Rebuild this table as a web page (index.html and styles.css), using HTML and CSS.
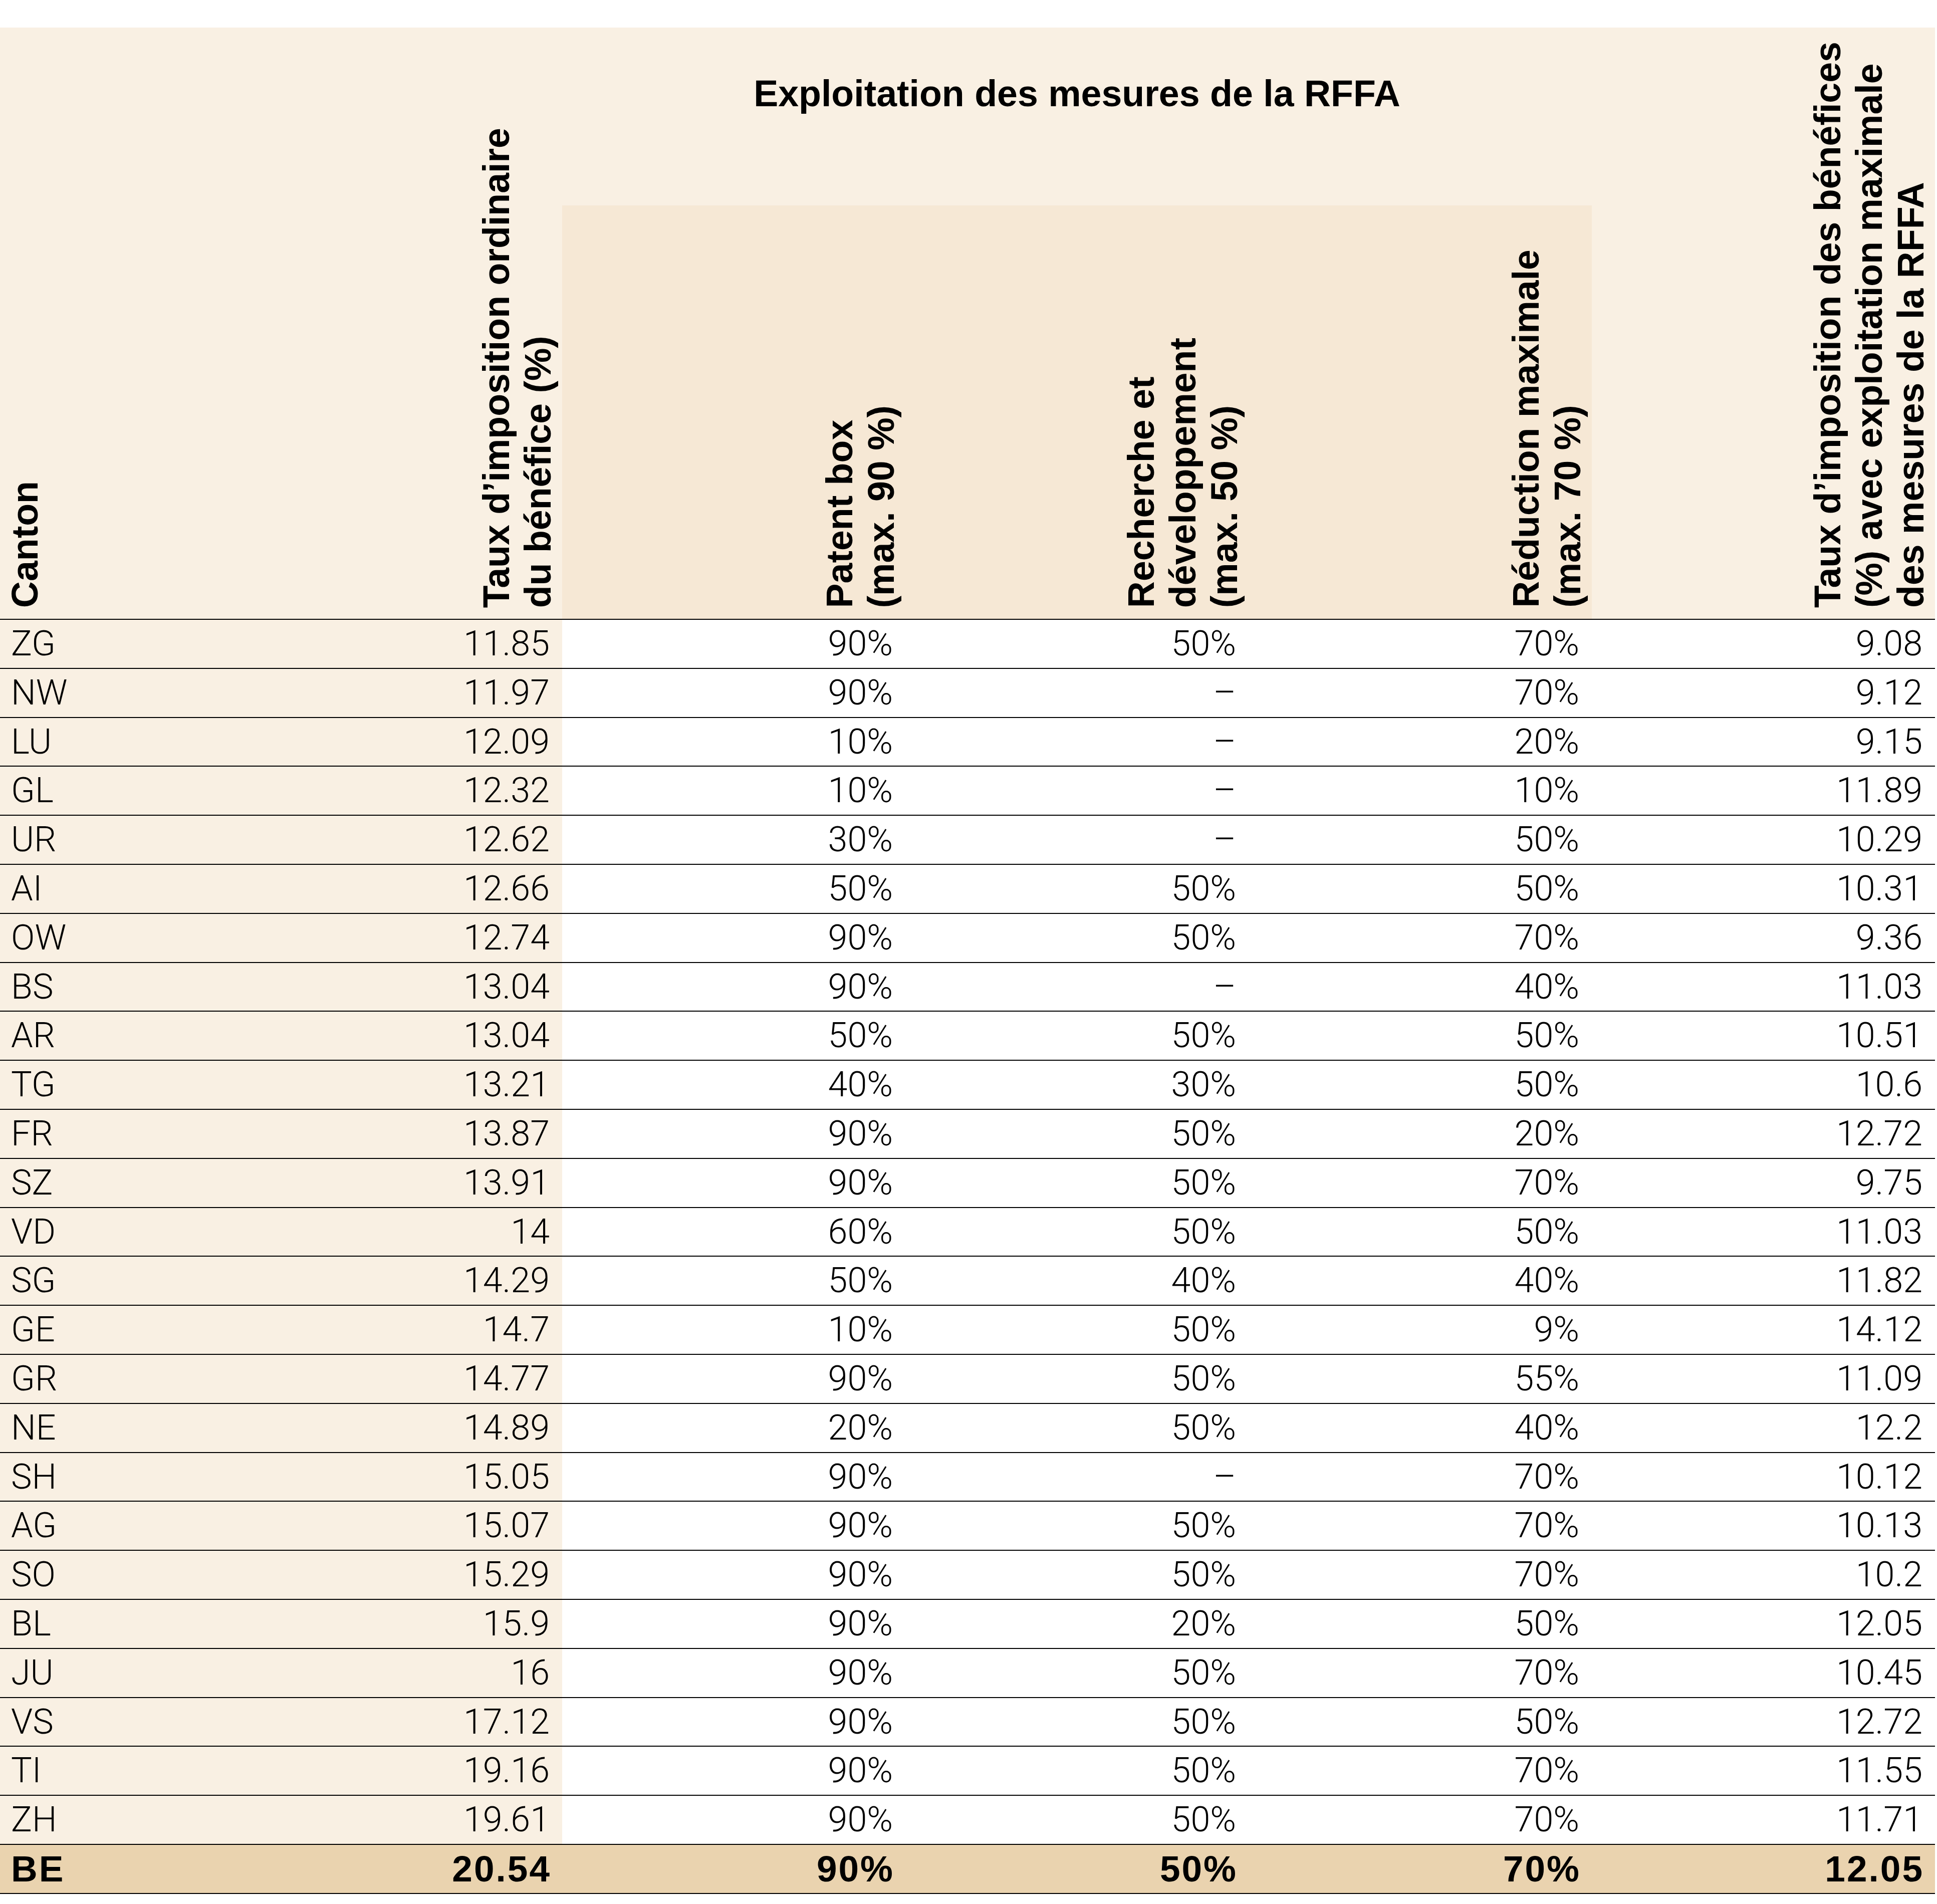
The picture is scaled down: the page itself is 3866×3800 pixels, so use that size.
FILE: index.html
```html
<!DOCTYPE html>
<html lang="fr">
<head>
<meta charset="utf-8">
<title>Exploitation des mesures de la RFFA</title>
<link rel="stylesheet" href="styles.css">
</head>
<body>
<div class="table">
  <div class="head">
    <div class="hcell h-canton"><div class="vtext">Canton</div></div>
    <div class="hcell h-right h-col2"><div class="vtext">Taux d’imposition ordinaire<br>du bénéfice (%)</div></div>
    <div class="h-title">Exploitation des mesures de la RFFA</div>
    <div class="hcell h-sub h-col3"><div class="vtext">Patent box<br>(max. 90 %)</div></div>
    <div class="hcell h-sub h-col4"><div class="vtext">Recherche et<br>développement<br>(max. 50 %)</div></div>
    <div class="hcell h-sub h-col5"><div class="vtext">Réduction maximale<br>(max. 70 %)</div></div>
    <div class="hcell h-right h-col6"><div class="vtext">Taux d’imposition des bénéfices<br>(%) avec exploitation maximale<br>des mesures de la RFFA</div></div>
  </div>

  <div class="row"><div class="c canton">ZG</div><div class="c beige">11.85</div><div class="c">90%</div><div class="c">50%</div><div class="c">70%</div><div class="c">9.08</div></div>
  <div class="row"><div class="c canton">NW</div><div class="c beige">11.97</div><div class="c">90%</div><div class="c">–</div><div class="c">70%</div><div class="c">9.12</div></div>
  <div class="row"><div class="c canton">LU</div><div class="c beige">12.09</div><div class="c">10%</div><div class="c">–</div><div class="c">20%</div><div class="c">9.15</div></div>
  <div class="row"><div class="c canton">GL</div><div class="c beige">12.32</div><div class="c">10%</div><div class="c">–</div><div class="c">10%</div><div class="c">11.89</div></div>
  <div class="row"><div class="c canton">UR</div><div class="c beige">12.62</div><div class="c">30%</div><div class="c">–</div><div class="c">50%</div><div class="c">10.29</div></div>
  <div class="row"><div class="c canton">AI</div><div class="c beige">12.66</div><div class="c">50%</div><div class="c">50%</div><div class="c">50%</div><div class="c">10.31</div></div>
  <div class="row"><div class="c canton">OW</div><div class="c beige">12.74</div><div class="c">90%</div><div class="c">50%</div><div class="c">70%</div><div class="c">9.36</div></div>
  <div class="row"><div class="c canton">BS</div><div class="c beige">13.04</div><div class="c">90%</div><div class="c">–</div><div class="c">40%</div><div class="c">11.03</div></div>
  <div class="row"><div class="c canton">AR</div><div class="c beige">13.04</div><div class="c">50%</div><div class="c">50%</div><div class="c">50%</div><div class="c">10.51</div></div>
  <div class="row"><div class="c canton">TG</div><div class="c beige">13.21</div><div class="c">40%</div><div class="c">30%</div><div class="c">50%</div><div class="c">10.6</div></div>
  <div class="row"><div class="c canton">FR</div><div class="c beige">13.87</div><div class="c">90%</div><div class="c">50%</div><div class="c">20%</div><div class="c">12.72</div></div>
  <div class="row"><div class="c canton">SZ</div><div class="c beige">13.91</div><div class="c">90%</div><div class="c">50%</div><div class="c">70%</div><div class="c">9.75</div></div>
  <div class="row"><div class="c canton">VD</div><div class="c beige">14</div><div class="c">60%</div><div class="c">50%</div><div class="c">50%</div><div class="c">11.03</div></div>
  <div class="row"><div class="c canton">SG</div><div class="c beige">14.29</div><div class="c">50%</div><div class="c">40%</div><div class="c">40%</div><div class="c">11.82</div></div>
  <div class="row"><div class="c canton">GE</div><div class="c beige">14.7</div><div class="c">10%</div><div class="c">50%</div><div class="c">9%</div><div class="c">14.12</div></div>
  <div class="row"><div class="c canton">GR</div><div class="c beige">14.77</div><div class="c">90%</div><div class="c">50%</div><div class="c">55%</div><div class="c">11.09</div></div>
  <div class="row"><div class="c canton">NE</div><div class="c beige">14.89</div><div class="c">20%</div><div class="c">50%</div><div class="c">40%</div><div class="c">12.2</div></div>
  <div class="row"><div class="c canton">SH</div><div class="c beige">15.05</div><div class="c">90%</div><div class="c">–</div><div class="c">70%</div><div class="c">10.12</div></div>
  <div class="row"><div class="c canton">AG</div><div class="c beige">15.07</div><div class="c">90%</div><div class="c">50%</div><div class="c">70%</div><div class="c">10.13</div></div>
  <div class="row"><div class="c canton">SO</div><div class="c beige">15.29</div><div class="c">90%</div><div class="c">50%</div><div class="c">70%</div><div class="c">10.2</div></div>
  <div class="row"><div class="c canton">BL</div><div class="c beige">15.9</div><div class="c">90%</div><div class="c">20%</div><div class="c">50%</div><div class="c">12.05</div></div>
  <div class="row"><div class="c canton">JU</div><div class="c beige">16</div><div class="c">90%</div><div class="c">50%</div><div class="c">70%</div><div class="c">10.45</div></div>
  <div class="row"><div class="c canton">VS</div><div class="c beige">17.12</div><div class="c">90%</div><div class="c">50%</div><div class="c">50%</div><div class="c">12.72</div></div>
  <div class="row"><div class="c canton">TI</div><div class="c beige">19.16</div><div class="c">90%</div><div class="c">50%</div><div class="c">70%</div><div class="c">11.55</div></div>
  <div class="row"><div class="c canton">ZH</div><div class="c beige">19.61</div><div class="c">90%</div><div class="c">50%</div><div class="c">70%</div><div class="c">11.71</div></div>
  <div class="row total"><div class="c canton">BE</div><div class="c">20.54</div><div class="c">90%</div><div class="c">50%</div><div class="c">70%</div><div class="c">12.05</div></div>
</div>
</body>
</html>
```

FILE: styles.css
```css
html, body {
  margin: 0;
  padding: 0;
  background: #ffffff;
}

.table {
  width: 3862px;
  margin-top: 55px;
  color: #000;
  font-family: Roboto, "Liberation Sans", Arial, sans-serif;
}

/* ---------- header ---------- */
.head {
  display: grid;
  grid-template-columns: 437px repeat(5, 685px);
  grid-template-rows: 355px 825px;
  background: #f9f0e3;
  border-bottom: 2px solid #000;
}

.hcell,
.h-title {
  font-family: "Liberation Sans", Arial, sans-serif;
  font-weight: 700;
  font-size: 73.5px;
  line-height: 83px;
}

.hcell {
  display: flex;
  align-items: flex-end;
}

.vtext {
  writing-mode: vertical-rl;
  transform: rotate(180deg);
  white-space: nowrap;
}

.h-canton {
  grid-column: 1;
  grid-row: 1 / 3;
  justify-content: flex-start;
  padding: 0 0 22px 8px;
}

.h-right {
  grid-row: 1 / 3;
  justify-content: flex-end;
  padding: 0 7px 22px 0;
}

.h-col2 { grid-column: 2; }
.h-col6 { grid-column: 6; }

.h-title {
  grid-column: 3 / 6;
  grid-row: 1;
  text-align: center;
  padding-top: 90px;
  white-space: nowrap;
}

.h-sub {
  grid-row: 2;
  background: #f6e8d5;
  justify-content: flex-end;
  padding: 0 7px 22px 0;
}

.h-col3 { grid-column: 3; }
.h-col4 { grid-column: 4; }
.h-col5 { grid-column: 5; }

/* ---------- body rows ---------- */
.row {
  display: grid;
  grid-template-columns: 437px repeat(5, 685px);
  height: 97.8px;
  box-sizing: border-box;
  border-bottom: 2px solid #000;
  font-size: 70px;
  font-weight: 300;
  line-height: 95.8px;
}

.c {
  text-align: right;
  padding-right: 25px;
  white-space: nowrap;
}

.c.canton {
  text-align: left;
  padding: 0 0 0 22px;
  background: #f9f0e3;
}

.c.beige {
  background: #f9f0e3;
}

.row.total {
  background: #ead3af;
  font-family: "Liberation Sans", Arial, sans-serif;
  font-weight: 700;
  font-size: 73px;
  letter-spacing: 3px;
}

.row.total .c {
  padding-right: 22px;
}

.row.total .c.canton {
  background: transparent;
  padding-right: 0;
}
```
